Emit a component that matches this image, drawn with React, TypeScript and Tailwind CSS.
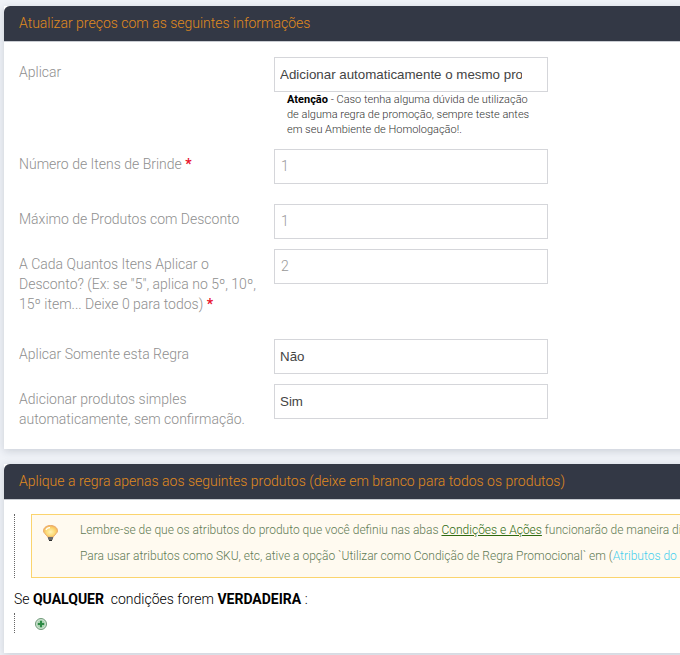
const roboto = "font-['Roboto',sans-serif]";

function PanelHeader({ title }: { title: string }) {
  return (
    <div className="h-[36px] rounded-t-[6px] border-b border-[#c9ccd2] bg-[#333845] pl-[15px] pt-[7px] text-[14px] leading-[20px] font-light text-[#e08a1e]">
      {title}
    </div>
  );
}

function Label({ children, required }: { children: React.ReactNode; required?: boolean }) {
  return (
    <div className="w-[270px] shrink-0 pl-[15px] pr-[15px] pt-[5px] text-[14px] leading-[20px] font-light text-[#8f8f8f]">
      {children}
      {required && <span className="font-bold text-[#e8112d]"> *</span>}
    </div>
  );
}

function Field({ value, select }: { value: string; select?: boolean }) {
  if (select) {
    return (
      <div className="h-[35px] w-[274px] border border-[#d5d6da] bg-white pl-[5px] pr-[25px] font-['Liberation_Sans',sans-serif] text-[13.33px] leading-[33px] text-[#444444]">
        <div className="overflow-hidden whitespace-nowrap">{value}</div>
      </div>
    );
  }
  return (
    <div className="h-[35px] w-[274px] border border-[#d5d6da] bg-white pl-[6px] text-[14px] leading-[33px] font-light text-[#999999]">
      {value}
    </div>
  );
}

function Bulb() {
  return (
    <svg width="15" height="16" viewBox="0 0 15 16" className="shrink-0">
      <defs>
        <radialGradient id="bulb-glow" cx="0.5" cy="0.55" r="0.55">
          <stop offset="0" stopColor="#fff4b8" />
          <stop offset="0.6" stopColor="#fbd873" />
          <stop offset="1" stopColor="#f5b45a" />
        </radialGradient>
      </defs>
      <path d="M7.500.5C3.600.5.500 2.700.500 5.800c0 2.300 2.400 3.500 3.600 5.200.3.400.5.800.5 1.200h5.800c0-.4.200-.8.500-1.200 1.200-1.700 3.600-2.900 3.600-5.200C14.500 2.700 11.400.5 7.500.5z" fill="url(#bulb-glow)" stroke="#e8a868" strokeWidth="1" />
      <path d="M3 5c.5-1.500 2-2.300 4-2.400" fill="none" stroke="#ffffff" strokeWidth="1.200" />
      <rect x="5" y="12" width="5" height="2.600" fill="#6a6a6a" />
      <rect x="6" y="14.500" width="3" height="1.500" fill="#2f2f2f" />
    </svg>
  );
}

function PlusIcon() {
  return (
    <svg width="12" height="12" viewBox="0 0 12 12">
      <circle cx="6" cy="6" r="5.500" fill="#cfe3d2" stroke="#6f9a78" strokeWidth="1" />
      <circle cx="6" cy="6" r="3.800" fill="#a9d2b0" />
      <path d="M6 2.800v6.400M2.800 6h6.400" stroke="#2d8a45" strokeWidth="2" />
    </svg>
  );
}

export default function App() {
  return (
    <div className={`h-[655px] w-[680px] overflow-hidden bg-[#eff2f7] pl-[4px] pt-[6px] ${roboto}`}>
      <div className="w-[690px] bg-white shadow-[0_2px_8px_rgba(40,50,70,0.18)]">
        <PanelHeader title="Atualizar preços com as seguintes informações" />
        <div className="pb-[20px] pt-[15px]">
          <div className="flex">
            <Label>Aplicar</Label>
            <div>
              <Field select value="Adicionar automaticamente o mesmo produto" />
              <p className="w-[258px] pl-[13px] text-[11px] leading-[15px] font-light text-[#333333]">
                <strong className="font-bold text-black">Atenção</strong> - Caso tenha alguma dúvida de utilização de alguma regra de promoção, sempre teste antes em seu Ambiente de Homologação!.
              </p>
            </div>
          </div>
          <div className="mt-[12px] flex">
            <Label required>Número de Itens de Brinde</Label>
            <Field value="1" />
          </div>
          <div className="mt-[20px] flex">
            <Label>Máximo de Produtos com Desconto</Label>
            <Field value="1" />
          </div>
          <div className="mt-[10px] flex h-[90px]">
            <Label required>A Cada Quantos Itens Aplicar o Desconto? (Ex: se "5", aplica no 5º, 10º, 15º item... Deixe 0 para todos)</Label>
            <Field value="2" />
          </div>
          <div className="flex">
            <Label>Aplicar Somente esta Regra</Label>
            <Field select value="Não" />
          </div>
          <div className="mt-[10px] flex">
            <Label>Adicionar produtos simples automaticamente, sem confirmação.</Label>
            <Field select value="Sim" />
          </div>
        </div>
      </div>

      <div className="mt-[15px] h-[189px] w-[690px] bg-white shadow-[0_2px_8px_rgba(40,50,70,0.18)]">
        <PanelHeader title="Aplique a regra apenas aos seguintes produtos (deixe em branco para todos os produtos)" />
        <div className="ml-[10px] mt-[14px] h-[64px] border-l border-dotted border-[#666666] pl-[16px]">
          <div className="flex h-[64px] w-[800px] gap-[22px] border border-[#fbd46e] bg-[#fffaf0] pl-[11px] pt-[2px] text-[12px] font-light text-[#5f7a55]">
            <div className="pt-[8px]">
              <Bulb />
            </div>
            <div className="leading-[26px]">
              <div>
                Lembre-se de que os atributos do produto que você definiu nas abas{" "}
                <span className="text-[#2f6a10] underline">Condições e Ações</span> funcionarão de maneira diferente
              </div>
              <div>
                Para usar atributos como SKU, etc, ative a opção `Utilizar como Condição de Regra Promocional` em (
                <span className="text-[#45cfee]">Atributos do Produto</span>)
              </div>
            </div>
          </div>
        </div>
        <div className="ml-[10px] mt-[11px] text-[14px] leading-[20px] font-light text-black">
          Se <strong className="font-bold">QUALQUER</strong>&nbsp; condições forem <strong className="font-bold">VERDADEIRA</strong> :
        </div>
        <div className="ml-[10px] mt-[4px] h-[20px] border-l border-dotted border-[#666666] pl-[20px] pt-[5px]">
          <PlusIcon />
        </div>
      </div>
    </div>
  );
}
